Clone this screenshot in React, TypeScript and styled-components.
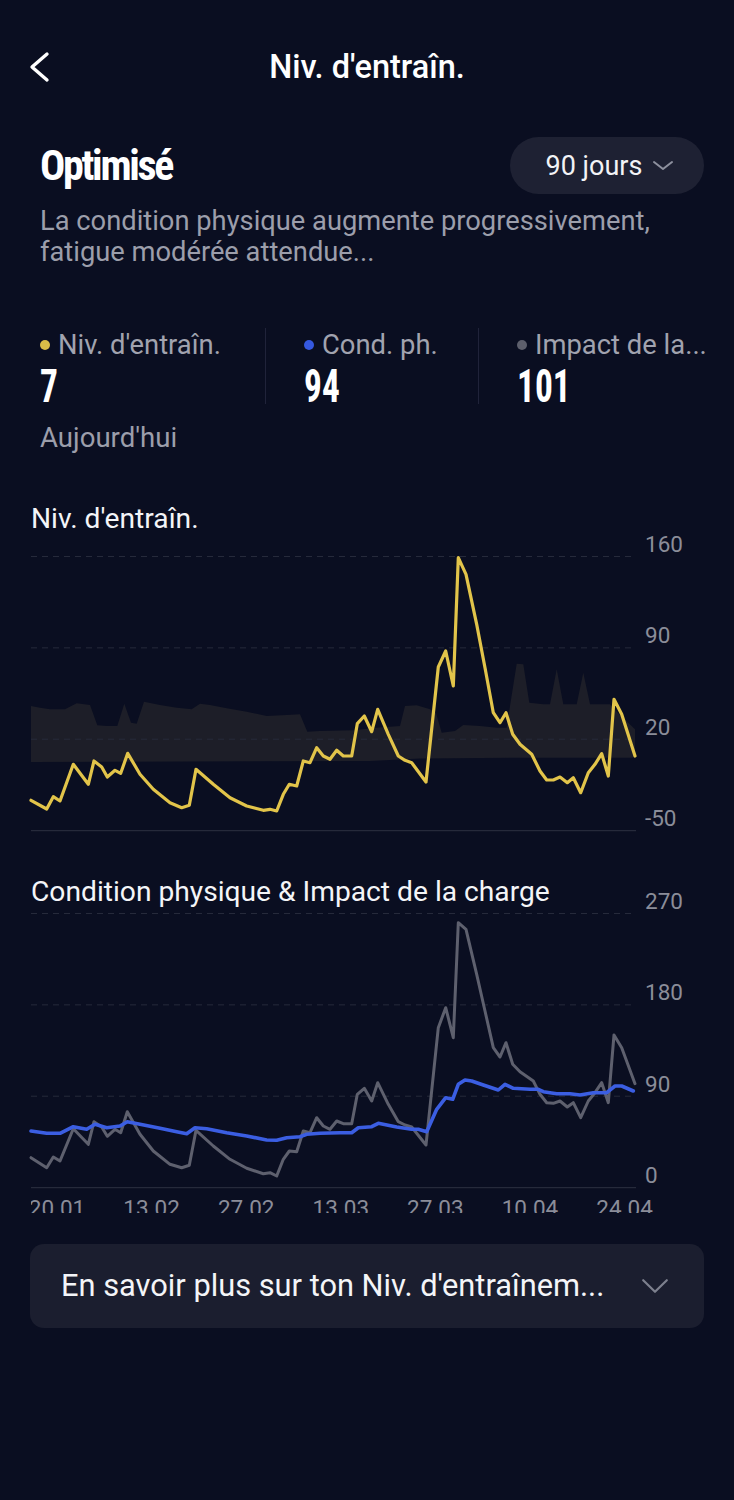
import React from "react";
import styled, { createGlobalStyle } from "styled-components";

type Pt = [number, number];

const GlobalStyle = createGlobalStyle`
  html, body {
    margin: 0;
    padding: 0;
    background: #0a0e21;
  }
  body {
    font-family: Roboto, "Noto Sans", "Liberation Sans", sans-serif;
    color: #ffffff;
    -webkit-font-smoothing: antialiased;
  }
  * {
    box-sizing: border-box;
  }
`;

const CHART_LEFT = 31;
const PLOT_W = 605;

// points traced in page coordinates, converted to the svg's own space below
const trainingLevel: Pt[] = [
  [31, 799.3], [46.7, 808], [53.3, 795.7], [60, 800], [73.3, 763.3], [88.3, 783.3],
  [94, 760], [101.7, 766], [107.3, 776], [115, 769.3], [120.7, 772.3], [127.7, 752.3],
  [140, 773.3], [153.3, 788.3], [170, 801.7], [181.7, 806.7], [189.3, 804.3], [196, 768.3],
  [213.3, 783.3], [230, 796.7], [246.7, 805], [263.3, 809.3], [270, 808.3], [276.7, 810],
  [283.3, 793.3], [289.3, 783.3], [296.7, 785], [303.3, 760], [310, 761.7], [316.7, 746.7],
  [323.3, 755], [330, 758.3], [336.7, 749.3], [343.3, 755], [351.7, 755], [357.3, 722.7],
  [364.3, 715], [371.7, 730.7], [377.7, 708.3], [388.3, 733.3], [398.3, 755], [405, 759.3],
  [411.7, 761.7], [426, 781], [438.3, 666], [445.7, 650], [453.3, 685], [458.3, 556.7],
  [466, 573.3], [476.7, 623.3], [485, 666.7], [493.3, 711.7], [500, 721.7], [506, 711.7],
  [512.7, 733.3], [520, 743.3], [531.7, 753.3], [540, 770], [546.7, 779], [553.3, 779],
  [560, 776], [567.3, 781.7], [573.3, 776.7], [580.7, 791.7], [588.3, 771.7], [595, 763.3],
  [601.7, 752.7], [608.3, 775], [614, 698.3], [621.7, 713.3], [635, 755],
];

const optimalBand: Pt[] = [
  [31, 705], [40, 706.7], [50, 708.3], [65, 708.3], [76.7, 702.3], [90, 704], [97.3, 724.3],
  [106.7, 725], [117.3, 725], [124.3, 702.7], [131, 721.7], [136.7, 722.7], [144, 700.7],
  [160, 704], [176.7, 706.7], [191.7, 708.3], [200, 702.7], [210, 704], [226.7, 707.3],
  [246.7, 710.7], [266.7, 715], [286.7, 714], [300, 713.3], [307.3, 730.7], [320, 730],
  [353.3, 729.3], [376.7, 726.7], [400, 725], [405, 705], [416.7, 704.3], [430, 708.3],
  [436, 712], [441.7, 731.7], [455, 730], [463.3, 724], [480, 725], [496.7, 726.7],
  [506.7, 726.7], [510, 705], [516.7, 662.7], [523.3, 663.3], [529.3, 701.7], [543.3, 703.3],
  [550, 703.3], [556.7, 668.3], [563.3, 703.3], [576.7, 703.3], [583.3, 671.7], [590, 703.3],
  [610, 703.3], [618, 712], [635, 728.3],
  [635, 756.7], [520, 756.7], [420, 757.5], [370, 760], [31, 761],
];

const loadImpact: Pt[] = [
  [31, 1156.7], [46.7, 1166.7], [53.3, 1156], [60, 1160], [73.3, 1127.7], [88.3, 1143.3],
  [94, 1120.7], [101.7, 1126], [107.3, 1135.3], [115, 1128.3], [120.7, 1131.7], [127.3, 1110.7],
  [140, 1133.3], [153.3, 1150], [170, 1163.3], [181.7, 1166.7], [189.3, 1164.3], [196, 1129.3],
  [213.3, 1145], [230, 1158.3], [246.7, 1167.3], [263.3, 1172.7], [270, 1171.7], [276.7, 1175],
  [283.3, 1158.3], [289.3, 1150], [296.7, 1150.7], [303.3, 1130], [310, 1131.7], [316.7, 1116.7],
  [323.3, 1125], [330, 1128.3], [336.7, 1120], [343.3, 1122.7], [351.7, 1122.7], [357.3, 1093.3],
  [364.3, 1087.3], [371.7, 1100], [377.7, 1081.7], [388.3, 1103.3], [398.3, 1120.7], [405, 1124],
  [411.7, 1126], [426, 1144], [438.3, 1026.7], [445.7, 1006.7], [453.3, 1036.7], [458.3, 921.7],
  [466, 928.3], [476.7, 973.3], [485, 1010], [493.3, 1046.7], [500, 1056], [506, 1041.7],
  [512.7, 1063.3], [520, 1070.7], [533.3, 1080], [540, 1093.3], [546.7, 1101.7], [553.3, 1102.3],
  [560, 1100], [567.3, 1106], [573.3, 1101.7], [580.7, 1116.7], [588.3, 1100], [595, 1091.7],
  [601.7, 1081.7], [608.3, 1101.7], [614, 1034], [621.7, 1046.7], [635, 1082.7],
];

const fitness: Pt[] = [
  [31, 1130], [46.7, 1132.3], [60, 1132.3], [73.3, 1125.7], [86.7, 1128.3], [95, 1123.3],
  [106.7, 1126.7], [120, 1125], [127.3, 1120.7], [140, 1123.3], [160, 1127.3], [176.7, 1130.7],
  [186.7, 1132.7], [195, 1126.7], [206.7, 1127.7], [226.7, 1131.7], [246.7, 1135], [266.7, 1139],
  [276.7, 1139.3], [286.7, 1136.7], [300, 1135.7], [306.7, 1133.3], [320, 1132.3], [340, 1131.7],
  [351.7, 1131.7], [358.3, 1126.7], [371.7, 1125.7], [378.3, 1122.3], [396.7, 1126], [411.7, 1128.3],
  [418.3, 1128.3], [426.7, 1130.7], [436.7, 1108.3], [445.7, 1096.7], [452.7, 1098.3], [458.3, 1083.3],
  [465, 1079], [471.7, 1080], [483.3, 1084], [498.3, 1089], [505, 1083.3], [513.3, 1087.3],
  [530, 1088.3], [538.3, 1088.3], [543.3, 1090.7], [556.7, 1092.7], [570, 1092.7], [580, 1094],
  [593.3, 1091.7], [606.7, 1091.7], [615, 1085], [621.7, 1085], [633.3, 1090],
];

const toLocal = (pts: Pt[], originY: number) =>
  pts.map(([x, y]) => `${(x - CHART_LEFT).toFixed(1)},${(y - originY).toFixed(1)}`).join(" ");

type Series = { points: Pt[]; color: string; width: number };

type ChartProps = {
  title: string;
  originY: number;
  height: number;
  gridTop: number;
  ticks: string[];
  band?: Pt[];
  series: Series[];
  dates?: string[];
};

const GRID_STEP = 91.35;

function Chart({ title, originY, height, gridTop, ticks, band, series, dates }: ChartProps) {
  const grid = [0, 1, 2].map((i) => gridTop + i * GRID_STEP);
  const bottom = gridTop + 3 * GRID_STEP;
  return (
    <ChartSection>
      <ChartTitle>{title}</ChartTitle>
      <Plot width={PLOT_W} height={height} viewBox={`0 0 ${PLOT_W} ${height}`}>
        {band && <polygon points={toLocal(band, originY)} fill="#1d1e28" />}
        {grid.map((y) => (
          <line
            key={y}
            x1={0}
            x2={PLOT_W}
            y1={y + 0.5}
            y2={y + 0.5}
            stroke="#262a3b"
            strokeWidth={1}
            strokeDasharray="6 5"
          />
        ))}
        <line x1={0} x2={PLOT_W} y1={bottom + 0.5} y2={bottom + 0.5} stroke="#262a3b" strokeWidth={1.2} />
        {series.map((s) => (
          <polyline
            key={s.color}
            points={toLocal(s.points, originY)}
            fill="none"
            stroke={s.color}
            strokeWidth={s.width}
            strokeLinejoin="round"
            strokeLinecap="round"
          />
        ))}
      </Plot>
      <AxisCol $bottomGap={height - bottom}>
        {ticks.map((t) => (
          <Tick key={t}>{t}</Tick>
        ))}
      </AxisCol>
      {dates && (
        <DateAxis>
          <DateTrack>
            {dates.map((d) => (
              <DateLabel key={d}>{d}</DateLabel>
            ))}
          </DateTrack>
        </DateAxis>
      )}
    </ChartSection>
  );
}

function BackIcon() {
  return (
    <svg width="24" height="32" viewBox="0 0 24 32" fill="none">
      <polyline points="19,3 4,16 19,29" stroke="#fff" strokeWidth="3.4" strokeLinecap="round" strokeLinejoin="round" />
    </svg>
  );
}

function Chevron({ w, h, color, stroke }: { w: number; h: number; color: string; stroke: number }) {
  const p = stroke;
  return (
    <svg width={w} height={h} viewBox={`0 0 ${w} ${h}`} fill="none">
      <polyline
        points={`${p},${p} ${w / 2},${h - p} ${w - p},${p}`}
        stroke={color}
        strokeWidth={stroke}
        strokeLinecap="round"
        strokeLinejoin="round"
      />
    </svg>
  );
}

export default function App() {
  return (
    <Page>
      <GlobalStyle />
      <Header>
        <BackButton aria-label="Retour">
          <BackIcon />
        </BackButton>
        <HeaderTitle>Niv. d'entraîn.</HeaderTitle>
      </Header>

      <StatusRow>
        <Status>Optimisé</Status>
        <RangePill>
          90 jours
          <Chevron w={22} h={11} color="#8d909e" stroke={2} />
        </RangePill>
      </StatusRow>
      <Description>
        La condition physique augmente progressivement, fatigue modérée attendue...
      </Description>

      <StatsRow>
        <StatCol $w="225px">
          <StatLabel>
            <Dot $color="#d8bd48" />
            Niv. d'entraîn.
          </StatLabel>
          <StatValue>7</StatValue>
        </StatCol>
        <StatCol $w="213px" $divider>
          <StatLabel>
            <Dot $color="#3558e0" />
            Cond. ph.
          </StatLabel>
          <StatValue>94</StatValue>
        </StatCol>
        <StatCol $divider>
          <StatLabel>
            <Dot $color="#5d5f6c" />
            Impact de la...
          </StatLabel>
          <StatValue>101</StatValue>
        </StatCol>
      </StatsRow>
      <Today>Aujourd'hui</Today>

      <Charts>
        <Chart
          title="Niv. d'entraîn."
          originY={531}
          height={300}
          gridTop={24}
          ticks={["160", "90", "20", "-50"]}
          band={optimalBand}
          series={[{ points: trainingLevel, color: "#e2c44a", width: 3.2 }]}
        />
        <Chart
          title="Condition physique & Impact de la charge"
          originY={904}
          height={284}
          gridTop={8}
          ticks={["270", "180", "90", "0"]}
          series={[
            { points: loadImpact, color: "#5e606e", width: 3 },
            { points: fitness, color: "#3b5ee2", width: 3.6 },
          ]}
          dates={["20.01", "13.02", "27.02", "13.03", "27.03", "10.04", "24.04"]}
        />
      </Charts>

      <LearnMore>
        <LearnText>En savoir plus sur ton Niv. d'entraînem...</LearnText>
        <Chevron w={28} h={16} color="#7d808e" stroke={2.2} />
      </LearnMore>
    </Page>
  );
}

const Page = styled.div`
  min-height: 1500px;
  background: #0a0e21;
  display: flex;
  flex-direction: column;
`;

const Header = styled.header`
  position: relative;
  height: 134px;
  display: flex;
  align-items: center;
  justify-content: center;
`;

const BackButton = styled.button`
  position: absolute;
  left: 28px;
  top: 51px;
  padding: 0;
  border: 0;
  background: none;
  display: flex;
`;

const HeaderTitle = styled.h1`
  margin: 0;
  font-size: 32.5px;
  font-weight: 500;
  line-height: 36px;
`;

const StatusRow = styled.div`
  margin-top: 3px;
  padding: 0 30px 0 40px;
  display: flex;
  align-items: center;
  justify-content: space-between;
`;

const Status = styled.div`
  font-family: "Roboto Condensed", "DejaVu Sans Condensed", Roboto, sans-serif;
  font-size: 42px;
  font-weight: 700;
  line-height: 56px;
  letter-spacing: -2.3px;
`;

const RangePill = styled.div`
  height: 57px;
  width: 194px;
  border-radius: 29px;
  background: #1e2133;
  display: flex;
  align-items: center;
  justify-content: center;
  gap: 10px;
  padding-left: 6px;
  font-size: 27px;
  color: #f2f3f6;
`;

const Description = styled.p`
  margin: 12px 30px 0 40px;
  font-size: 27.3px;
  line-height: 31px;
  color: #9c9eab;
`;

const StatsRow = styled.div`
  margin-top: 60px;
  padding: 0 30px 0 40px;
  display: flex;
`;

const StatCol = styled.div<{ $w?: string; $divider?: boolean }>`
  flex: ${({ $w }) => ($w ? `0 0 ${$w}` : "1 1 auto")};
  min-width: 0;
  height: 76px;
  padding-left: ${({ $divider }) => ($divider ? "38px" : "0")};
  border-left: ${({ $divider }) => ($divider ? "1px solid #20233a" : "none")};
  display: flex;
  flex-direction: column;
`;

const StatLabel = styled.div`
  margin-top: 2px;
  display: flex;
  align-items: center;
  font-size: 27.4px;
  line-height: 30px;
  color: #a1a3af;
  white-space: nowrap;
`;

const Dot = styled.span<{ $color: string }>`
  width: 10px;
  height: 10px;
  border-radius: 50%;
  background: ${({ $color }) => $color};
  margin-right: 8px;
  flex: 0 0 auto;
`;

// the app's numeral face is narrower than Roboto Condensed, so squeeze it
const StatValue = styled.div`
  margin-top: 4px;
  font-family: "Roboto Condensed", "DejaVu Sans Condensed", Roboto, sans-serif;
  font-size: 46px;
  font-weight: 700;
  line-height: 44px;
  transform: scaleX(0.77);
  transform-origin: left center;
`;

const Today = styled.div`
  margin: 19px 0 0 40px;
  font-size: 27.6px;
  line-height: 30px;
  color: #9c9eab;
`;

const Charts = styled.div`
  margin-top: 53px;
  display: flex;
  flex-direction: column;
  gap: 47px;
`;

const ChartSection = styled.section`
  display: grid;
  grid-template-columns: ${PLOT_W}px 1fr;
  grid-template-rows: auto auto auto;
  column-gap: 9px;
  padding: 0 30px 0 ${CHART_LEFT}px;
`;

const ChartTitle = styled.h2`
  grid-column: 1;
  grid-row: 1;
  margin: 0;
  font-size: 28.2px;
  font-weight: 400;
  line-height: 26px;
  color: #f4f5f8;
  white-space: nowrap;
`;

const Plot = styled.svg`
  grid-column: 1;
  grid-row: 2;
  display: block;
  overflow: visible;
`;

const AxisCol = styled.div<{ $bottomGap: number }>`
  grid-column: 2;
  grid-row: 1 / 3;
  align-self: end;
  display: flex;
  flex-direction: column;
  gap: ${GRID_STEP - 24}px;
  padding-bottom: ${({ $bottomGap }) => $bottomGap}px;
`;

const Tick = styled.span`
  font-size: 22.5px;
  line-height: 24px;
  color: #8b8d99;
`;

const DateAxis = styled.div`
  grid-column: 1 / -1;
  grid-row: 3;
  height: 24px;
  padding-top: 6px;
  overflow: hidden;
`;

const DateTrack = styled.div`
  display: flex;
  margin-left: -21.3px;
`;

const DateLabel = styled.span`
  flex: 0 0 94.6px;
  text-align: center;
  font-size: 22.5px;
  line-height: 26px;
  color: #8b8d99;
`;

const LearnMore = styled.div`
  margin: 31px 30px 0 30px;
  height: 84px;
  border-radius: 14px;
  background: #1b1e2f;
  display: flex;
  align-items: center;
  justify-content: space-between;
  padding: 0 35px 0 31px;
`;

const LearnText = styled.span`
  font-size: 30.8px;
  line-height: 34px;
  color: #f4f5f8;
  white-space: nowrap;
`;
